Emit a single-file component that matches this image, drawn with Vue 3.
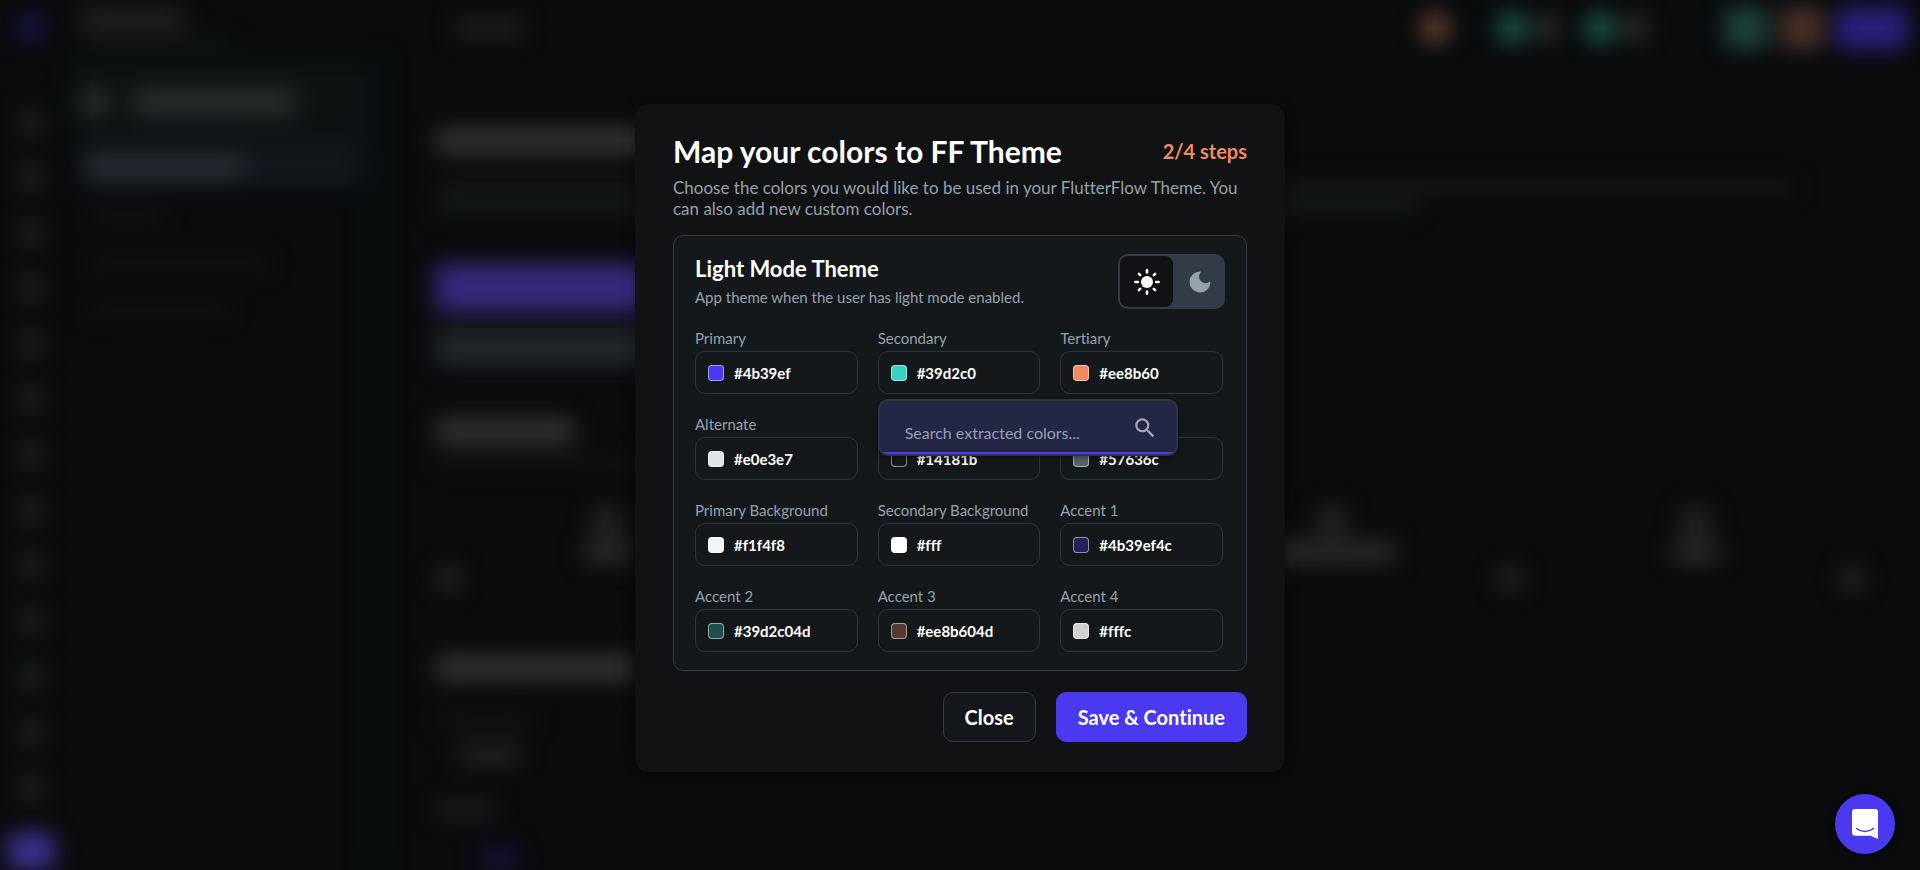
<script setup>
import { ref } from 'vue'

const railItems = Array.from({ length: 13 }, (_, i) => i)
const mode = ref('light')
const query = ref('')

const colors = ref([
  { id: 'primary', label: 'Primary', value: '#4b39ef', swatch: '#4b39ef' },
  { id: 'secondary', label: 'Secondary', value: '#39d2c0', swatch: '#39d2c0' },
  { id: 'tertiary', label: 'Tertiary', value: '#ee8b60', swatch: '#ee8b60' },
  { id: 'alternate', label: 'Alternate', value: '#e0e3e7', swatch: '#e0e3e7' },
  { id: 'primary-text', label: 'Primary Text', value: '#14181b', swatch: '#14181b' },
  { id: 'secondary-text', label: 'Secondary Text', value: '#57636c', swatch: '#57636c' },
  { id: 'primary-bg', label: 'Primary Background', value: '#f1f4f8', swatch: '#f1f4f8' },
  { id: 'secondary-bg', label: 'Secondary Background', value: '#fff', swatch: '#ffffff' },
  { id: 'accent-1', label: 'Accent 1', value: '#4b39ef4c', swatch: '#4b39ef4c' },
  { id: 'accent-2', label: 'Accent 2', value: '#39d2c04d', swatch: '#39d2c04d' },
  { id: 'accent-3', label: 'Accent 3', value: '#ee8b604d', swatch: '#ee8b604d' },
  { id: 'accent-4', label: 'Accent 4', value: '#fffc', swatch: '#ffffffcc' },
])
</script>

<template>
  <div class="page">
    <div class="app" aria-hidden="true">
      <div class="rail">
        <i class="logo"></i>
        <i v-for="n in railItems" :key="n" class="dot"></i>
        <i class="rail-end"></i>
      </div>
      <div class="body">
        <div class="topbar">
          <div class="project">
            <i class="bar name"></i>
            <i class="bar path"></i>
          </div>
          <i class="bar tools"></i>
          <div class="actions">
            <i class="disc orange"></i>
            <i class="disc green"></i><i class="disc gray"></i>
            <i class="disc green"></i><i class="disc gray"></i>
            <i class="tile green wide-gap"></i><i class="tile orange"></i><i class="tile violet"></i>
          </div>
        </div>
        <div class="columns">
          <div class="side">
            <div class="side-head"><i class="bar icon"></i><i class="bar title"></i></div>
            <div class="side-active"><i class="bar"></i></div>
            <i class="bar faint short"></i>
            <i class="bar faint"></i>
            <i class="bar faint mid"></i>
          </div>
          <div class="main">
            <i class="bar heading"></i>
            <i class="bar para"></i>
            <i class="bar para second"></i>
            <i class="cta"></i>
            <i class="cta ghost"></i>
            <i class="bar heading small"></i>
            <i class="bar para caption"></i>
            <div class="stats">
              <div class="stat"><i class="bar"></i><i class="bar"></i></div>
              <div class="stat large"><i class="bar"></i><i class="bar"></i></div>
              <div class="stat"><i class="bar"></i><i class="bar"></i></div>
            </div>
            <div class="marks"><i class="bar"></i><i class="bar mark-mid"></i><i class="bar"></i></div>
            <i class="bar heading medium"></i>
            <i class="bar para tiny"></i>
            <i class="bar value"></i>
            <i class="bar para tag"></i>
            <i class="bar spot"></i>
          </div>
        </div>
      </div>
    </div>

    <section class="modal" role="dialog" aria-labelledby="dialog-title">
      <header class="modal-head">
        <h1 id="dialog-title">Map your colors to FF Theme</h1>
        <span class="steps">2/4 steps</span>
      </header>
      <p class="lead">Choose the colors you would like to be used in your FlutterFlow Theme. You can also add new custom colors.</p>

      <div class="panel">
        <div class="panel-head">
          <div>
            <h2>Light Mode Theme</h2>
            <p class="hint">App theme when the user has light mode enabled.</p>
          </div>
          <div class="toggle">
            <button type="button" :class="{ on: mode === 'light' }" aria-label="Light mode" @click="mode = 'light'">
              <svg viewBox="0 0 28 28" width="28" height="28">
                <circle cx="14" cy="14" r="6" fill="currentColor" />
                <g stroke="currentColor" stroke-width="2.6" stroke-linecap="round">
                  <path d="M14 2.4v2M14 23.6v2M2.4 14h2.4M23.2 14h2.4M5.9 5.9l1.3 1.3M20.8 20.8l1.3 1.3M5.9 22.1l1.3-1.3M20.8 7.2l1.3-1.3" />
                </g>
              </svg>
            </button>
            <button type="button" :class="{ on: mode === 'dark' }" aria-label="Dark mode" @click="mode = 'dark'">
              <svg viewBox="0 0 28 28" width="28" height="28">
                <path d="M14.500 3.600a10.500 10.500 0 1 0 10 11.200c.1-.9-.8-1.300-1.500-.7a6.400 6.400 0 0 1-8.600-9.200c.6-.6.900-1.300.1-1.300z" fill="currentColor" />
              </svg>
            </button>
          </div>
        </div>

        <div class="grid">
          <div v-for="c in colors" :key="c.id" class="field">
            <label :for="c.id">{{ c.label }}</label>
            <div class="box">
              <span class="swatch" :style="{ backgroundColor: c.swatch }"></span>
              <input :id="c.id" v-model="c.value" type="text" spellcheck="false" />
            </div>
            <div v-if="c.id === 'secondary'" class="search">
              <input v-model="query" type="text" placeholder="Search extracted colors..." aria-label="Search extracted colors" />
              <svg viewBox="0 0 24 24" width="26" height="26">
                <path d="M15.5 14h-.79l-.28-.27A6.47 6.47 0 0 0 16 9.5 6.5 6.5 0 1 0 9.5 16c1.61 0 3.09-.59 4.23-1.57l.27.28v.79l5 4.99L20.49 19l-4.99-5zm-6 0C7.01 14 5 11.99 5 9.5S7.01 5 9.5 5 14 7.01 14 9.5 11.99 14 9.5 14z" fill="currentColor" />
              </svg>
            </div>
          </div>
        </div>
      </div>

      <footer class="modal-foot">
        <button type="button" class="btn">Close</button>
        <button type="button" class="btn primary">Save &amp; Continue</button>
      </footer>
    </section>

    <button type="button" class="chat" aria-label="Open chat">
      <svg viewBox="0 0 28 32" width="28" height="32">
        <path d="M4 1h20a3 3 0 0 1 3 3v27l-7.500-3.200H4a3 3 0 0 1-3-3V4a3 3 0 0 1 3-3z" fill="#fff" />
        <path d="M5.500 20.500c5 4 12 4 17 0" fill="none" stroke="#4b39ef" stroke-width="1.600" stroke-linecap="round" />
      </svg>
    </button>
  </div>
</template>

<style>
body {
  background: #090b0c;
}
</style>

<style scoped>
.page {
  position: relative;
  display: grid;
  place-items: center;
  box-sizing: border-box;
  min-height: 100vh;
  padding-top: 6px;
  overflow: hidden;
  background: #090b0c;
  font-family: Lato, "Open Sans", sans-serif;
  font-variant-ligatures: none;
  color: #fff;
}

/* Dimmed workspace behind the dialog */
.app {
  position: absolute;
  inset: 0;
  display: flex;
  filter: blur(11px);
}
.app i {
  display: block;
  flex: none;
}
.rail {
  display: flex;
  flex-direction: column;
  justify-content: space-between;
  align-items: center;
  width: 62px;
  padding-top: 12px;
  box-sizing: border-box;
}
.logo { width: 30px; height: 30px; margin-bottom: 36px; background: #16123e; }
.dot { width: 24px; height: 24px; background: #202224; }
.rail-end { width: 48px; height: 38px; border-radius: 10px; background: #3c308e; }
.body { flex: 1; min-width: 0; }
.bar { background: #1f2022; border-radius: 6px; }
.topbar {
  display: flex;
  align-items: center;
  height: 56px;
  padding: 0 12px 0 18px;
}
.project { width: 374px; }
.name { width: 105px; height: 18px; background: #262728; }
.path { width: 150px; height: 10px; margin-top: 8px; background: #151819; }
.tools { width: 70px; height: 22px; background: #1d1e1f; }
.actions {
  display: flex;
  align-items: center;
  gap: 12px;
  margin-left: auto;
}
.disc { width: 32px; height: 32px; border-radius: 50%; }
.disc.orange { margin-right: 33px; background: #603e30; }
.disc.green { margin-right: -6px; background: #1a5549; }
.disc.gray { width: 26px; height: 26px; margin-right: 12px; background: #303030; }
.tile { width: 44px; height: 42px; border-radius: 8px; }
.tile.green { background: #1d423c; }
.tile.orange { background: #483027; }
.tile.violet { width: 72px; background: #2a207e; }
.wide-gap { margin-left: 52px; }
.columns { display: flex; }
.side {
  width: 323px;
  min-height: 814px;
  box-sizing: border-box;
  padding-left: 8px;
  border-right: 18px solid #0a0f10;
}
.side-head {
  display: flex;
  align-items: center;
  gap: 24px;
  height: 92px;
  padding-left: 10px;
  background: #0d1112;
}
.side-head .icon { width: 28px; height: 26px; background: #2b2f30; }
.side-head .title { width: 165px; height: 28px; background: #282c2d; }
.side-active {
  height: 38px;
  margin: 0 8px 0 12px;
  padding-top: 8px;
  box-sizing: border-box;
  background: #14181d;
}
.side-active .bar { width: 162px; height: 22px; background: #2a2d32; }
.faint { width: 180px; height: 16px; margin: 31px 0 0 20px; background: #121314; }
.faint.short { width: 75px; margin-top: 22px; }
.faint.mid { width: 140px; }
.main { flex: 1; min-width: 0; padding: 72px 20px 0 50px; }
.heading { width: 260px; height: 26px; background: #323334; }
.para { width: 93%; height: 14px; margin-top: 26px; background: #151718; }
.para.second { width: 67%; margin-top: 6px; background: #171a1b; }
.cta { width: 300px; height: 48px; margin-top: 50px; background: #352a7c; }
.cta.ghost { height: 36px; margin-top: 18px; background: #23272a; }
.heading.small { width: 140px; margin-top: 52px; }
.para.caption { width: 200px; height: 10px; margin-top: 14px; }
.stats {
  display: flex;
  justify-content: space-between;
  margin: 38px 180px 0 148px;
}
.stat {
  display: grid;
  justify-items: center;
  gap: 4px;
  width: 48px;
}
.stat .bar { width: 30px; height: 30px; background: #232425; }
.stat .bar + .bar { width: 100%; height: 24px; background: #28292a; }
.stat.large { width: 130px; margin-left: 360px; }
.marks {
  display: flex;
  align-items: center;
  margin: 3px 36px 0 2px;
}
.marks .bar { width: 24px; height: 24px; background: #262728; }
.marks .mark-mid { margin: 0 318px 0 auto; }
.heading.medium { width: 200px; margin-top: 64px; }
.para.tiny { width: 100px; margin-top: 32px; background: #131516; }
.value { width: 65px; height: 20px; margin: 18px 0 0 22px; background: #222324; }
.para.tag { width: 60px; margin-top: 36px; height: 18px; background: #1c1d1e; }
.spot { width: 40px; height: 26px; margin: 26px 0 0 44px; background: #131033; }

/* Dialog */
.modal {
  position: relative;
  box-sizing: border-box;
  width: 100%;
  max-width: 650px;
  padding: 30px 38px;
  border-radius: 14px;
  background: #101213;
  box-shadow: 0 0 12px rgba(0, 0, 0, 0.4);
}
.modal-head {
  display: flex;
  align-items: center;
  justify-content: space-between;
}
h1, h2, p { margin: 0; }
h1 {
  font-size: 30px;
  line-height: 34px;
  font-weight: 700;
}
.steps {
  color: #ee8b60;
  font-size: 20px;
  line-height: 34px;
  font-weight: 700;
}
.lead {
  margin-top: 9px;
  font-size: 17px;
  line-height: 21px;
  color: #95a1ac;
}
.panel {
  margin-top: 16px;
  padding: 18px 21px;
  border: 1px solid #323b45;
  border-radius: 10px;
  background: #14181b;
}
.panel-head {
  display: flex;
  justify-content: space-between;
}
h2 {
  font-size: 22px;
  line-height: 30px;
  font-weight: 700;
}
.hint {
  margin-top: 3px;
  font-size: 15px;
  line-height: 20px;
  color: #95a1ac;
}
.toggle {
  display: grid;
  grid-template-columns: 53px 1fr;
  box-sizing: border-box;
  width: 107px;
  height: 55px;
  padding: 2px;
  border-radius: 10px;
  background: #323b47;
}
.toggle button {
  display: grid;
  place-items: center;
  padding: 0;
  border: 0;
  border-radius: 8px;
  background: none;
  color: #95a1ac;
}
.toggle button + button { padding-left: 4px; }
.toggle .on {
  background: #101213;
  color: #fff;
}
.grid {
  display: grid;
  grid-template-columns: repeat(3, minmax(0, 1fr));
  gap: 21px 20px;
  margin-top: 20px;
  padding-right: 2px;
}
.field { position: relative; }
.field label {
  display: block;
  font-size: 15px;
  line-height: 18px;
  color: #95a1ac;
}
.box {
  display: flex;
  align-items: center;
  gap: 10px;
  box-sizing: border-box;
  height: 43px;
  margin-top: 4px;
  padding: 0 12px;
  border: 1px solid #2d343c;
  border-radius: 10px;
}
.swatch {
  flex: none;
  box-sizing: border-box;
  width: 16px;
  height: 16px;
  border: 1px solid rgba(255, 255, 255, 0.5);
  border-radius: 4px;
}
input {
  min-width: 0;
  flex: 1;
  padding: 0;
  border: 0;
  outline: 0;
  background: none;
  font-family: inherit;
  font-variant-ligatures: none;
  color: #fff;
}
.box input {
  font-size: 15px;
  line-height: 20px;
  font-weight: 700;
}
.search {
  position: absolute;
  z-index: 2;
  top: calc(100% + 5px);
  left: 0;
  display: flex;
  align-items: center;
  box-sizing: border-box;
  width: 300px;
  height: 57px;
  padding: 0 18px 0 25px;
  border: 2px solid #2f3440;
  border-radius: 10px;
  background: linear-gradient(#4b39ef, #4b39ef) bottom / 100% 2px no-repeat #242646;
  box-shadow: 0 2px 5px rgba(0, 0, 0, 0.4);
  color: #a5a8ba;
}
.search input {
  padding-top: 10px;
  font-size: 16px;
  line-height: 20px;
}
.search input::placeholder {
  color: #9a9fb3;
  opacity: 1;
}
.modal-foot {
  display: flex;
  justify-content: flex-end;
  gap: 20px;
  margin-top: 21px;
}
.btn {
  height: 50px;
  padding: 0 21px;
  border: 1px solid #323b45;
  border-radius: 10px;
  background: #14181b;
  font-family: inherit;
  font-size: 20px;
  font-variant-ligatures: none;
  font-weight: 700;
  color: #fff;
}
.btn.primary {
  border-color: #4b39ef;
  background: #4b39ef;
}
.chat {
  position: fixed;
  right: 25px;
  bottom: 16px;
  display: grid;
  place-items: center;
  width: 60px;
  height: 60px;
  padding: 0;
  border: 0;
  border-radius: 50%;
  background: #4b39ef;
  box-shadow: 0 1px 8px rgba(0, 0, 0, 0.5);
}
</style>
